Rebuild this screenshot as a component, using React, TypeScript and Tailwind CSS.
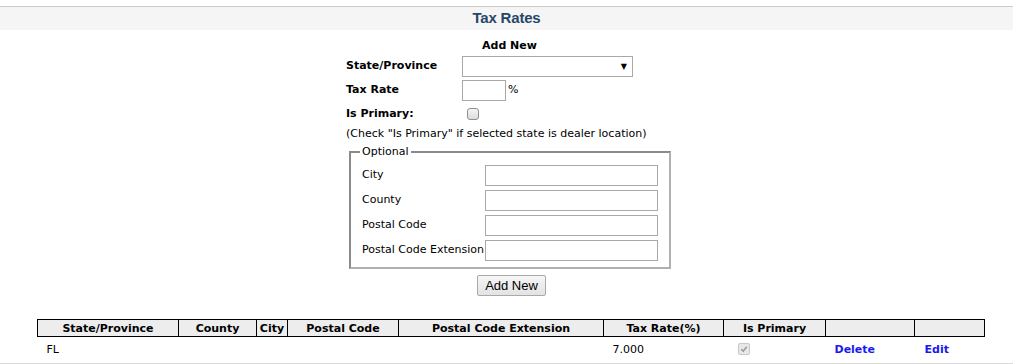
import React from 'react'

const optionalFields = ['City', 'County', 'Postal Code', 'Postal Code Extension']

const columns = [
  { label: 'State/Province', w: 'w-[141px]' },
  { label: 'County', w: 'w-[78px]' },
  { label: 'City', w: 'w-[31px]' },
  { label: 'Postal Code', w: 'w-[111px]' },
  { label: 'Postal Code Extension', w: 'w-[205px]' },
  { label: 'Tax Rate(%)', w: 'w-[120px]' },
  { label: 'Is Primary', w: 'w-[102px]' },
  { label: '', w: 'w-[89px]' },
  { label: '', w: 'w-[70px]' },
]

function TaxRates() {
  return (
    <div className="min-h-screen bg-white text-[11px] text-black font-['DejaVu_Sans',Verdana,sans-serif]">
      <div className="pt-[6px]">
        <div className="w-[1013px] border-t border-[#cccccc] bg-[#f5f5f5] h-[24px] flex items-center justify-center">
          <h1 className="font-['Liberation_Sans',Arial,sans-serif] font-bold text-[15px] text-[#27476a] tracking-[-0.2px]">
            Tax Rates
          </h1>
        </div>
      </div>

      <div className="mx-auto w-[324px] pl-px">
        <div className="text-center font-bold pt-[9px] h-[25px] leading-[14px] pl-[4px]">Add New</div>

        <div className="flex items-center h-[23px]">
          <label className="w-[116px] font-bold">State/Province</label>
          <div className="w-[171px] h-[21px] border border-[#a9a9a9] bg-white flex items-center justify-end pr-[5px]">
            <span className="text-[8px] leading-none">▼</span>
          </div>
        </div>

        <div className="flex items-center h-[24px]">
          <label className="w-[116px] font-bold">Tax Rate</label>
          <input className="w-[44px] h-[21px] border border-[#a9a9a9] bg-white outline-none" />
          <span className="ml-[2px]">%</span>
        </div>

        <div className="flex items-center h-[24px]">
          <label className="w-[116px] font-bold">Is Primary:</label>
          <span className="ml-[5px] w-[12px] h-[12px] rounded-[3px] border border-[#8f8f8f] bg-gradient-to-b from-[#f4f4f4] to-[#dcdcdc]" />
        </div>

        <div className="h-[18px] leading-[16px] whitespace-nowrap">
          (Check "Is Primary" if selected state is dealer location)
        </div>

        <fieldset className="ml-[3px] w-[321px] border-2 border-[#b0b0b0] border-t-[#8a8a8a] border-l-[#8a8a8a] px-[11px] pb-[6px] pt-0 mt-px">
          <legend className="px-[2px] ml-[-2px] leading-[13px]">Optional</legend>
          <div className="flex flex-col gap-[4px] pt-[7px]">
            {optionalFields.map((f) => (
              <div key={f} className="flex items-center">
                <label className="w-[123px] whitespace-nowrap">{f}</label>
                <input className="w-[173px] h-[21px] border border-[#a9a9a9] bg-white outline-none" />
              </div>
            ))}
          </div>
        </fieldset>

        <div className="flex justify-center pt-[6px] pl-[8px]">
          <button className="h-[21px] px-[7px] border border-[#a9a9a9] rounded-[2px] bg-gradient-to-b from-[#f6f6f6] to-[#e3e3e3] text-[13px] font-['Liberation_Sans',Arial,sans-serif] leading-none">
            Add New
          </button>
        </div>
      </div>

      <div className="mt-[23px] ml-[37px] w-[948px]">
        <table className="w-[948px] border-collapse table-fixed">
          <thead>
            <tr className="bg-[#eeeded]">
              {columns.map((c, i) => (
                <th key={i} className={`${c.w} border border-black h-[17px] p-0 text-center font-bold leading-[15px]`}>
                  {c.label}
                </th>
              ))}
            </tr>
          </thead>
          <tbody>
            <tr className="h-[24px]">
              <td className="pl-[9px] pt-[2px]">FL</td>
              <td />
              <td />
              <td />
              <td />
              <td className="pl-[9px] pt-[2px]">7.000</td>
              <td className="pl-[14px] pt-[1px]">
                <span className="flex items-center justify-center w-[12px] h-[12px] rounded-[2px] border border-[#c8c8c8] bg-[#e8e8e8]">
                  <svg viewBox="0 0 10 10" className="w-[8px] h-[8px]">
                    <path d="M1.5 5.2 L4 7.6 L8.5 2.2" stroke="#9a9a9a" strokeWidth="1.8" fill="none" />
                  </svg>
                </span>
              </td>
              <td className="pl-[9px] pt-[2px]">
                <a className="font-bold text-[#1a1aef] cursor-pointer">Delete</a>
              </td>
              <td className="pl-[10px] pt-[2px]">
                <a className="font-bold text-[#1a1aef] cursor-pointer">Edit</a>
              </td>
            </tr>
          </tbody>
        </table>
      </div>
      <div className="mt-[2px] w-[1013px] border-t-2 border-[#d9d9d9]" />
    </div>
  )
}

export default function App() {
  return <TaxRates />
}
